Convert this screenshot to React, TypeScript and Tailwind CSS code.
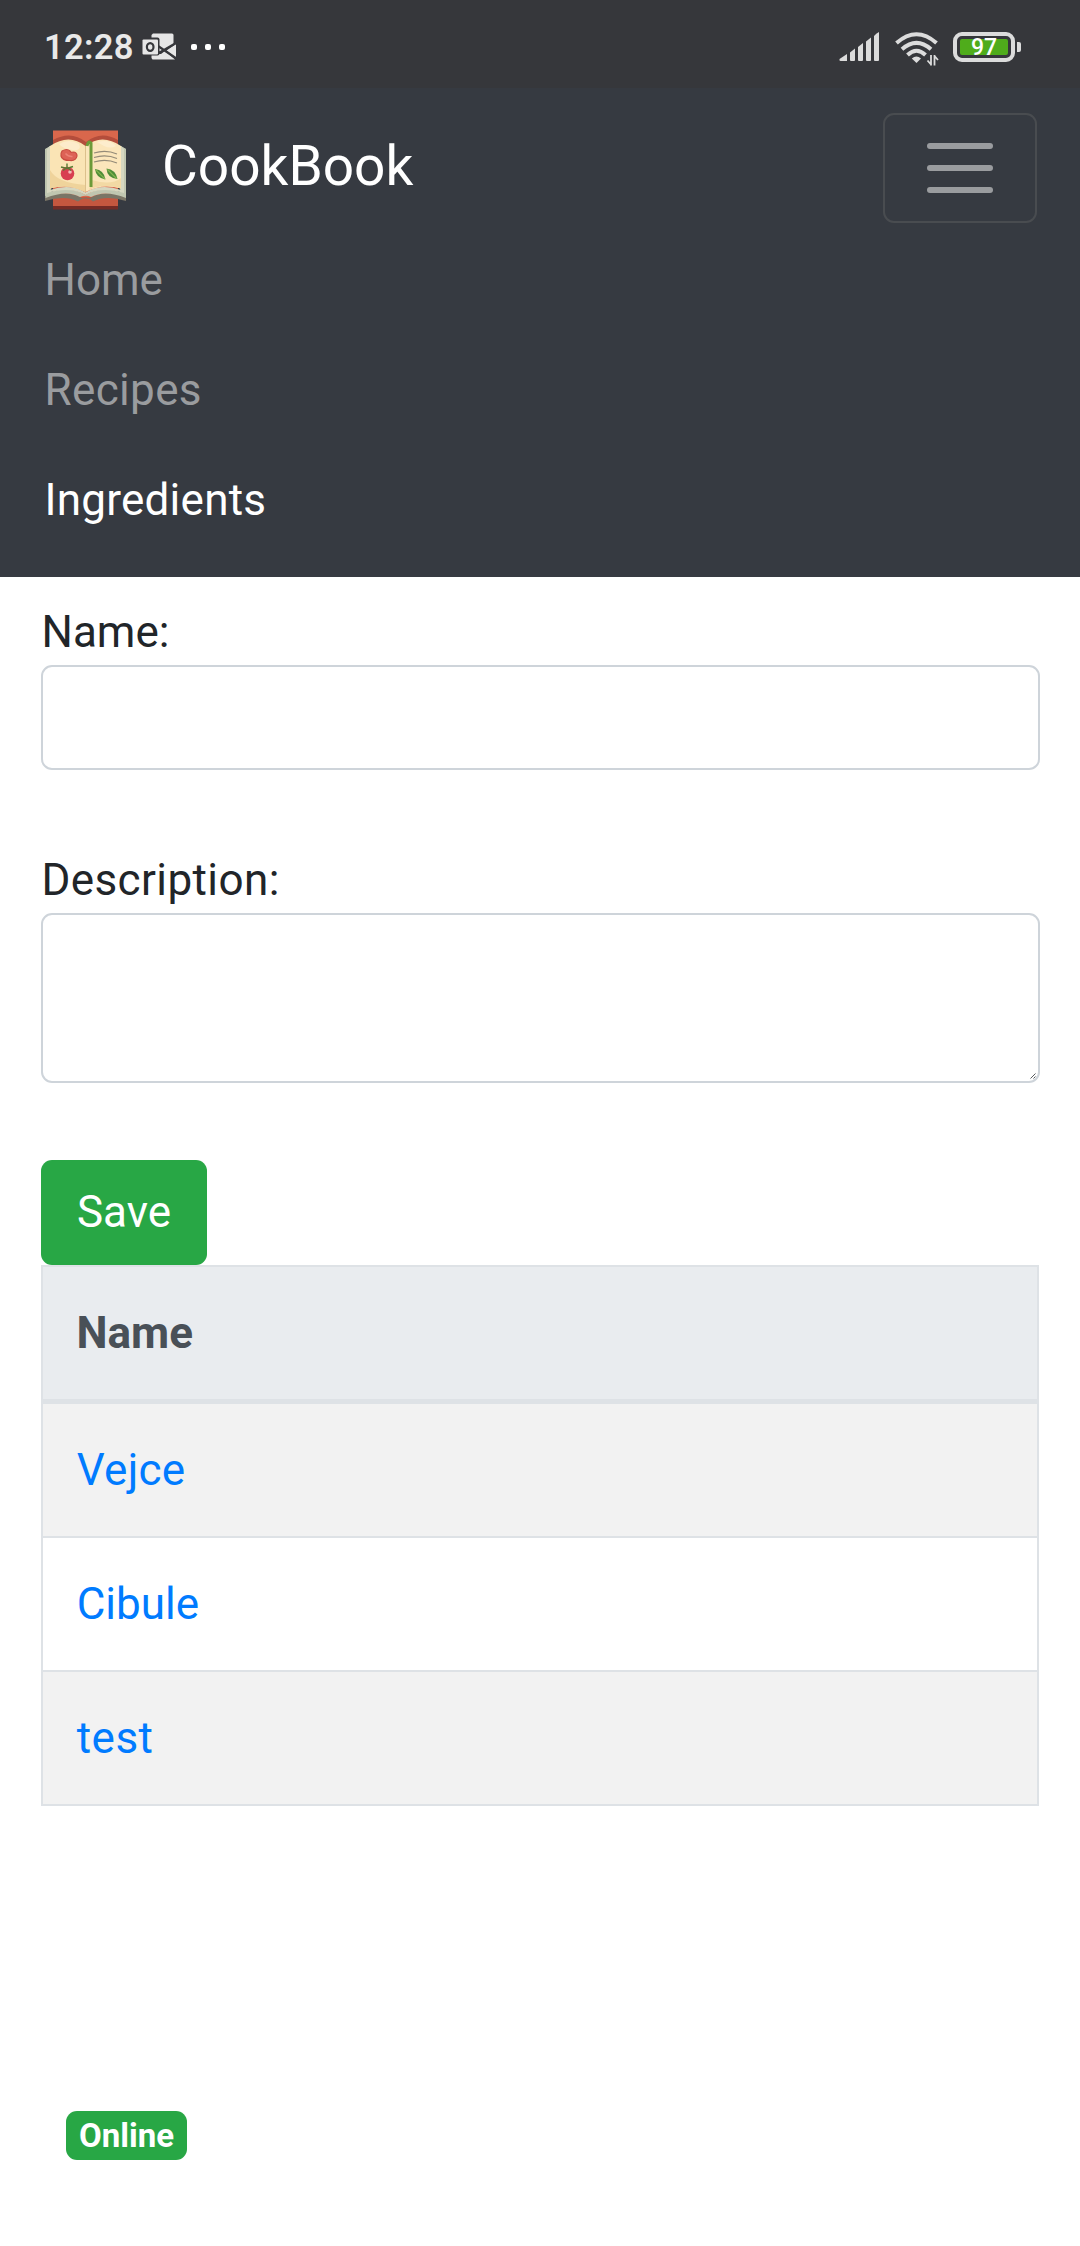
import React from "react";

const navLinks = [
  { label: "Home", className: "text-[#9a9c9f]" },
  { label: "Recipes", className: "tracking-[0.35px] text-[#9a9c9f]" },
  { label: "Ingredients", className: "tracking-[0.25px] text-white" },
];

const ingredients = [
  { name: "Vejce", className: "tracking-[0.3px]" },
  { name: "Cibule", className: "" },
  { name: "test", className: "tracking-[0.5px]" },
];

function OutlookIcon() {
  return (
    <svg width="35" height="28" viewBox="0 0 35 28" className="ml-[8px] mb-px shrink-0">
      <path d="M11 0.500h19a1.500 1.500 0 0 1 1.500 1.500v9L18 19 9.500 10V2z" fill="#e6e6e6" />
      <path d="M9.500 25V21H19l4-3 10 8.500H10.500z" fill="#e6e6e6" />
      <path d="M34 11v14L24.500 17.500z" fill="#e6e6e6" />
      <path d="M16 13l18.500 12.500M16 20.500l18-10.500" stroke="#36373b" strokeWidth="2.200" />
      <rect x="-1.500" y="4.500" width="19" height="18" rx="2" fill="#36373b" />
      <rect x="0.500" y="6.500" width="15.500" height="15" rx="1" fill="#e6e6e6" />
      <ellipse cx="8.200" cy="14" rx="3.300" ry="3.900" fill="none" stroke="#36373b" strokeWidth="2.200" />
    </svg>
  );
}

function SignalIcon() {
  return (
    <svg width="42" height="30" viewBox="0 0 42 30">
      <g fill="#dcdcdc">
        <path d="M0.500 27L8 22v7H1.500Q0 29 0.500 27z" />
        <path d="M11 20.500l5-4V28q0 1-1 1h-3q-1 0-1-1z" />
        <path d="M19 15l5-4V28q0 1-1 1h-3q-1 0-1-1z" />
        <path d="M27 9.500l5-4V28q0 1-1 1h-3q-1 0-1-1z" />
        <path d="M35 4q2-2.500 5-4V28q0 1-1 1h-3q-1 0-1-1z" />
      </g>
    </svg>
  );
}

function WifiIcon() {
  return (
    <svg width="44" height="34" viewBox="0 0 44 34">
      <g fill="none" stroke="#dcdcdc" strokeWidth="4">
        <path d="M1.500 11Q21.500-6.500 41.500 11" />
        <path d="M7 17.200Q21.500 4.500 36 17.200" />
        <path d="M12.500 23Q21.500 14.500 30.500 23" />
      </g>
      <path d="M16.800 26.500Q21.500 22.500 26 26.500L21.500 31z" fill="#dcdcdc" />
      <path d="M36 23v10.500M39.500 33.500V23M32.500 28.500l3.500 4M43 28L39.500 24" stroke="#dcdcdc" strokeWidth="1.800" fill="none" />
    </svg>
  );
}

function StatusBar() {
  return (
    <div className="flex h-[88px] items-center justify-between bg-[#36373b] pl-[44px] pr-[59px]">
      <div className="flex items-center pt-[6px]">
        <span className="text-[34.500px] font-semibold leading-none tracking-[0.3px] text-[#e9e9e9]">12:28</span>
        <OutlookIcon />
        <div className="ml-[14px] flex gap-[8px]">
          <span className="size-[6px] rounded-[2px] bg-white" />
          <span className="size-[6px] rounded-[2px] bg-white" />
          <span className="size-[6px] rounded-[2px] bg-white" />
        </div>
      </div>
      <div className="flex items-center pt-[6px]">
        <SignalIcon />
        <div className="ml-[14px] pt-[4px]">
          <WifiIcon />
        </div>
        <div className="ml-[14px] flex h-[30px] w-[62px] rounded-[9px] border-4 border-[#dcdcdc] p-[3px]">
          <div className="flex flex-1 items-center justify-center rounded-[2px] bg-[#4fac1b] text-[23px] font-medium leading-none text-white">
            97
          </div>
        </div>
        <span className="ml-[2px] h-[10px] w-[4px] rounded-r-[2px] bg-[#dcdcdc]" />
      </div>
    </div>
  );
}

function BookLogo() {
  return (
    <svg width="82" height="82" viewBox="0 0 82 82" className="block shrink-0">
      <path d="M8 0.500h65v77H8z" fill="#d9674c" />
      <path d="M8 10Q26 0 41 12Q56 0 73 10V16H8z" fill="#b44d3b" />
      <path d="M8 67h65v9H8z" fill="#c4573f" />
      <path d="M8 76h65v3.500H8z" fill="#742b25" />
      <path d="M0 19l6-3v50L0 70zM81 19l-6-3v50l6 4z" fill="#b9c2ae" />
      <path d="M0 66Q22 60 35 67Q38 69.500 41 67Q44 69.500 47 67Q60 60 81 66V71Q61 65 48 71.500Q45 68 40.500 68.500Q37 68 33 71.500Q20 65 0 71z" fill="#7a7566" />
      <path d="M0.500 19l4.500-3v46Q25 56 40.500 65Q56 56 76 62V16l5 3v49Q60 59.500 46 67Q41 64.500 35 67Q22 59.500 0.500 68z" fill="#c0c6b0" />
      <path d="M2 19l3-3v44Q25 53 40.500 62.500Q56 53 76 60V16l3 3v44Q56 56 40.500 65Q25 56 2 63z" fill="#d6d7c0" />
      <path d="M5 16Q24 3 40.500 16V62Q24 53 5 58.500z" fill="#fae4b5" />
      <path d="M40.500 16Q57 3 76 16V58.500Q57 53 40.500 62z" fill="#fbe6bb" />
      <path d="M5 40Q12 53 40.500 55V62Q24 53 5 58.500z" fill="#efd39b" />
      <path d="M47 50Q66 56 76 48V58.500Q57 53 44 60z" fill="#f2d9a4" />
      <path d="M14 14Q24 8 34 14Q37 21 28 20Q18 19 14 14z" fill="#fdeccb" />
      <path d="M52 12Q65 9 71 16Q66 19 59 16z" fill="#fdedcd" />
      <path d="M40.500 16V62" stroke="#dcc08c" strokeWidth="1" />
      <path d="M42 16q1.500-6 4-3V57" stroke="#6c9a39" strokeWidth="3" fill="none" />
      <path d="M17 21q5-3 8 0q1 2 3 1q4 0 4 4q-1 5-7 4.500q-8 0-9-4.500q-0.500-3 1-5z" fill="#dd6256" stroke="#c94a40" strokeWidth="1.200" />
      <path d="M20.500 23.500q3 3.500 7 3" stroke="#ec8276" strokeWidth="1.500" fill="none" />
      <circle cx="22.500" cy="43.500" r="6.800" fill="#d83e50" />
      <circle cx="25" cy="42" r="1.800" fill="#f6b7b8" />
      <path d="M22 39V33.500M16 37l6 1.500 6-2M18 40.500l4-3 4 3" stroke="#587b34" strokeWidth="1.400" fill="none" />
      <path d="M49 23q12-3.500 23 1M49 27.500q12-3.500 23 1M49 32q12-3.500 23 1" stroke="#948b78" strokeWidth="1.300" fill="none" />
      <path d="M50 39q9 1 10.500 10.500Q51 48 50 39z" fill="#4f8d38" />
      <path d="M61.500 38.500q9 1 11 10.500Q62 48 61.500 38.500z" fill="#4f8d38" />
      <path d="M51 40l9 9M62.500 39.500l9 9" stroke="#83b44e" strokeWidth="1.200" />
    </svg>
  );
}

function Navbar() {
  return (
    <nav className="h-[489px] bg-[#363a41] px-[43px] pt-[25px]">
      <div className="flex h-[112px] items-start justify-between pl-[2px]">
        <a className="flex items-center pt-[17px]">
          <BookLogo />
          <span className="relative -top-[5px] ml-[35px] text-[55px] leading-[82px] text-white">CookBook</span>
        </a>
        <button className="flex h-[110px] w-[154px] flex-col items-center justify-center gap-[16px] rounded-[11px] border-2 border-[#494c50]">
          <span className="h-[6px] w-[66px] rounded-full bg-[#9a9c9f]" />
          <span className="h-[6px] w-[66px] rounded-full bg-[#9a9c9f]" />
          <span className="h-[6px] w-[66px] rounded-full bg-[#9a9c9f]" />
        </button>
      </div>
      <ul className="pl-[1.500px] leading-[66px]">
        {navLinks.map((link) => (
          <li key={link.label} className="py-[22px]">
            <a className={link.className}>{link.label}</a>
          </li>
        ))}
      </ul>
    </nav>
  );
}

function ResizeGrip() {
  return (
    <svg width="6" height="6" viewBox="0 0 6 6" className="absolute bottom-[2px] right-[2px]">
      <path d="M0.500 5.500L5.500 0.500M3.500 5.500L5.500 3.500" stroke="#45484c" strokeWidth="0.900" />
    </svg>
  );
}

export default function App() {
  return (
    <div className="relative h-[2246px] w-[1080px] overflow-hidden bg-white font-[Roboto,sans-serif] text-[44px] text-[#212529]">
      <StatusBar />
      <Navbar />
      <main className="px-[41px] pt-[22px]">
        <label className="block pl-[0.500px] leading-[66px]">Name:</label>
        <div className="mr-[-1px] h-[105px] rounded-[11px] border-2 border-[#ced4da]" />
        <label className="mt-[77px] block pl-[0.500px] leading-[66px] tracking-[0.4px]">Description:</label>
        <div className="relative mr-[-1px] h-[170px] rounded-[11px] border-2 border-[#ced4da]">
          <ResizeGrip />
        </div>
        <button className="mt-[77px] block h-[105px] w-[166px] rounded-[11px] bg-[#28a745] pb-px leading-[66px] text-white">
          Save
        </button>
        <table className="w-full border-separate border-spacing-0 border-x-2 border-t-2 border-[#dee2e6]">
          <thead>
            <tr>
              <th className="h-[137px] border-b-[5px] border-[#dee2e6] bg-[#e9ecef] px-[33.500px] py-0 text-left font-bold leading-[66px] text-[#495057]">
                Name
              </th>
            </tr>
          </thead>
          <tbody>
            {ingredients.map((item) => (
              <tr key={item.name} className="odd:bg-[#f2f2f2]">
                <td className="h-[134px] border-b-2 border-[#dee2e6] px-[33.700px] py-0 leading-[66px] text-[#007bff]">
                  <a className={item.className}>{item.name}</a>
                </td>
              </tr>
            ))}
          </tbody>
        </table>
      </main>
      <div className="absolute left-[66px] top-[2111px] flex h-[49px] w-[121px] items-center justify-center rounded-[11px] bg-[#28a745] text-[33px] font-bold leading-[33px] text-white">
        Online
      </div>
    </div>
  );
}
